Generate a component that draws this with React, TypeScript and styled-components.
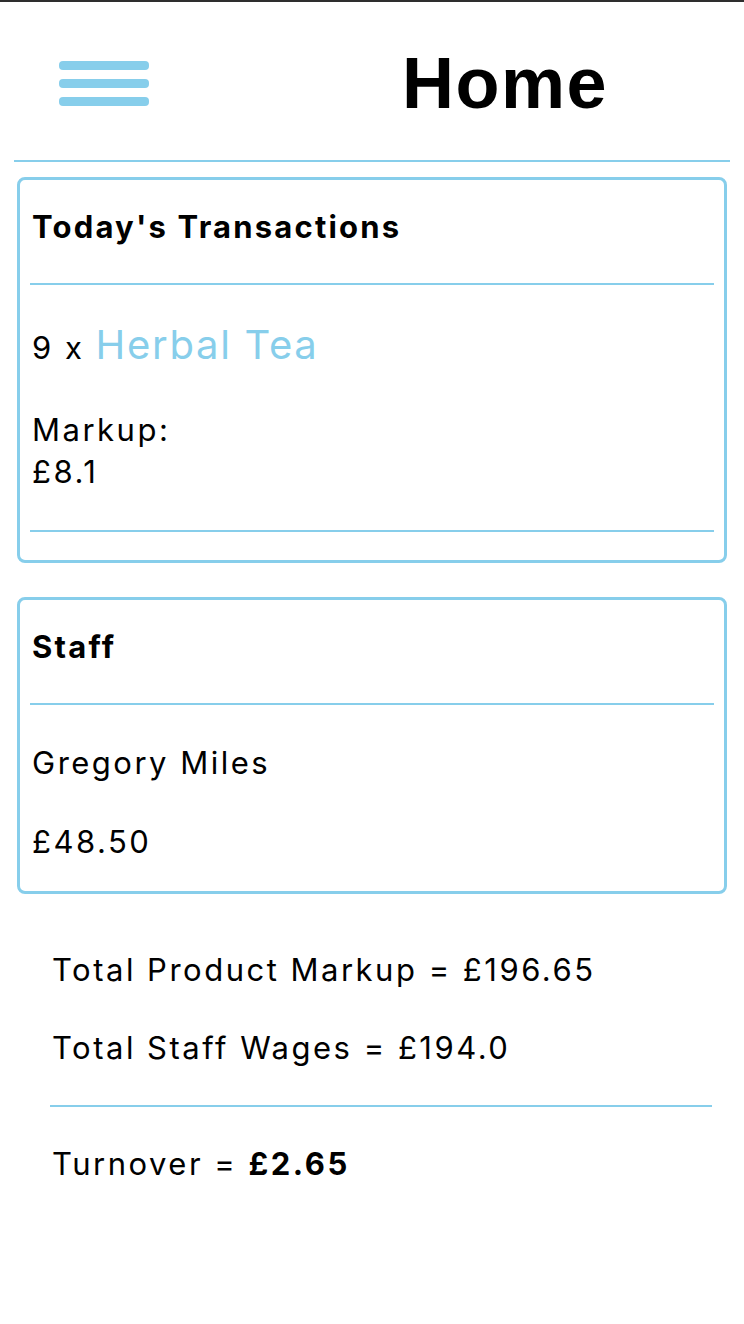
import React from 'react';
import styled, {createGlobalStyle} from 'styled-components';

const sky = '#87CEEB';

const GlobalStyle = createGlobalStyle`
  body {
    margin: 0;
    background: #fff;
    font-family: Inter, "Noto Sans", sans-serif;
    color: #000;
  }
`

const Page = styled.div`
  border-top: 2px solid #2e2e2e;
  min-height: 1322px;
`

export const Header = styled.header`
  height: 154px;
  padding: 4px 0 0 59px;
  display: flex;
  align-items: center;
  gap: 253px;
`

const Burger = styled.button`
  display: flex;
  flex-direction: column;
  gap: 9px;
  padding: 0;
  border: none;
  background: none;
`

const BurgerBar = styled.span`
  display: block;
  width: 90px;
  height: 9px;
  border-radius: 4px;
  background: ${sky};
`

const Title = styled.h1`
  margin: 0;
  font-family: "Liberation Sans", Arial, sans-serif;
  font-weight: 700;
  font-size: 72px;
  letter-spacing: 1.5px;
  line-height: 1;
`

const Rule = styled.hr<{ $inset: number; $top?: number }>`
  border: none;
  height: 2px;
  background: ${sky};
  margin: ${p => p.$top || 0}px ${p => p.$inset}px 0;
`

const Card = styled.section<{ $top: number; $bottom: number }>`
  margin: ${p => p.$top}px 17px 0;
  border: 3px solid ${sky};
  border-radius: 8px;
  padding: 27px 12px ${p => p.$bottom}px;
`

const CardTitle = styled.h3`
  margin: 0;
  font-size: 31px;
  line-height: 40px;
  font-weight: 700;
  letter-spacing: 2.2px;
`

const Line = styled.p<{ $top: number; $height?: number }>`
  margin: ${p => p.$top}px 0 0;
  font-size: 31px;
  letter-spacing: 2.5px;
  line-height: ${p => p.$height || 40}px;
`

const Product = styled.span`
  font-size: 40px;
  line-height: 1;
  letter-spacing: 1.7px;
  color: ${sky};
`

const Totals = styled.div`
  padding: 0 32px 0 52px;
`

const CardRule = styled(Rule)`
  margin-left: -2px;
  margin-right: -2px;
`

const staff = [{name: 'Gregory Miles', pay: '£48.50'}];

const App: React.FC = () => {
  return (
    <Page>
      <GlobalStyle />
      <Header>
        <Burger aria-label="menu">
          <BurgerBar />
          <BurgerBar />
          <BurgerBar />
        </Burger>
        <Title>Home</Title>
      </Header>
      <Rule $inset={14} />

      <Card $top={15} $bottom={28}>
        <CardTitle>Today's Transactions</CardTitle>
        <CardRule $inset={0} $top={36} />
        <Line $top={38} $height={50}>
          9 x <Product>Herbal Tea</Product>
        </Line>
        <Line $top={36} $height={42}>
          Markup:<br />£8.1
        </Line>
        <CardRule $inset={0} $top={37} />
      </Card>

      <Card $top={34} $bottom={29}>
        <CardTitle>Staff</CardTitle>
        <CardRule $inset={0} $top={36} />
        {staff.map(s => (
          <React.Fragment key={s.name}>
            <Line $top={38}>{s.name}</Line>
            <Line $top={39}>{s.pay}</Line>
          </React.Fragment>
        ))}
      </Card>

      <Totals>
        <Line $top={56}>Total Product Markup = £196.65</Line>
        <Line $top={38}>Total Staff Wages = £194.0</Line>
        <Rule $inset={0} $top={37} style={{marginLeft: -2}} />
        <Line $top={37}>Turnover = <b>£2.65</b></Line>
      </Totals>
    </Page>
  )
}

export default App;
